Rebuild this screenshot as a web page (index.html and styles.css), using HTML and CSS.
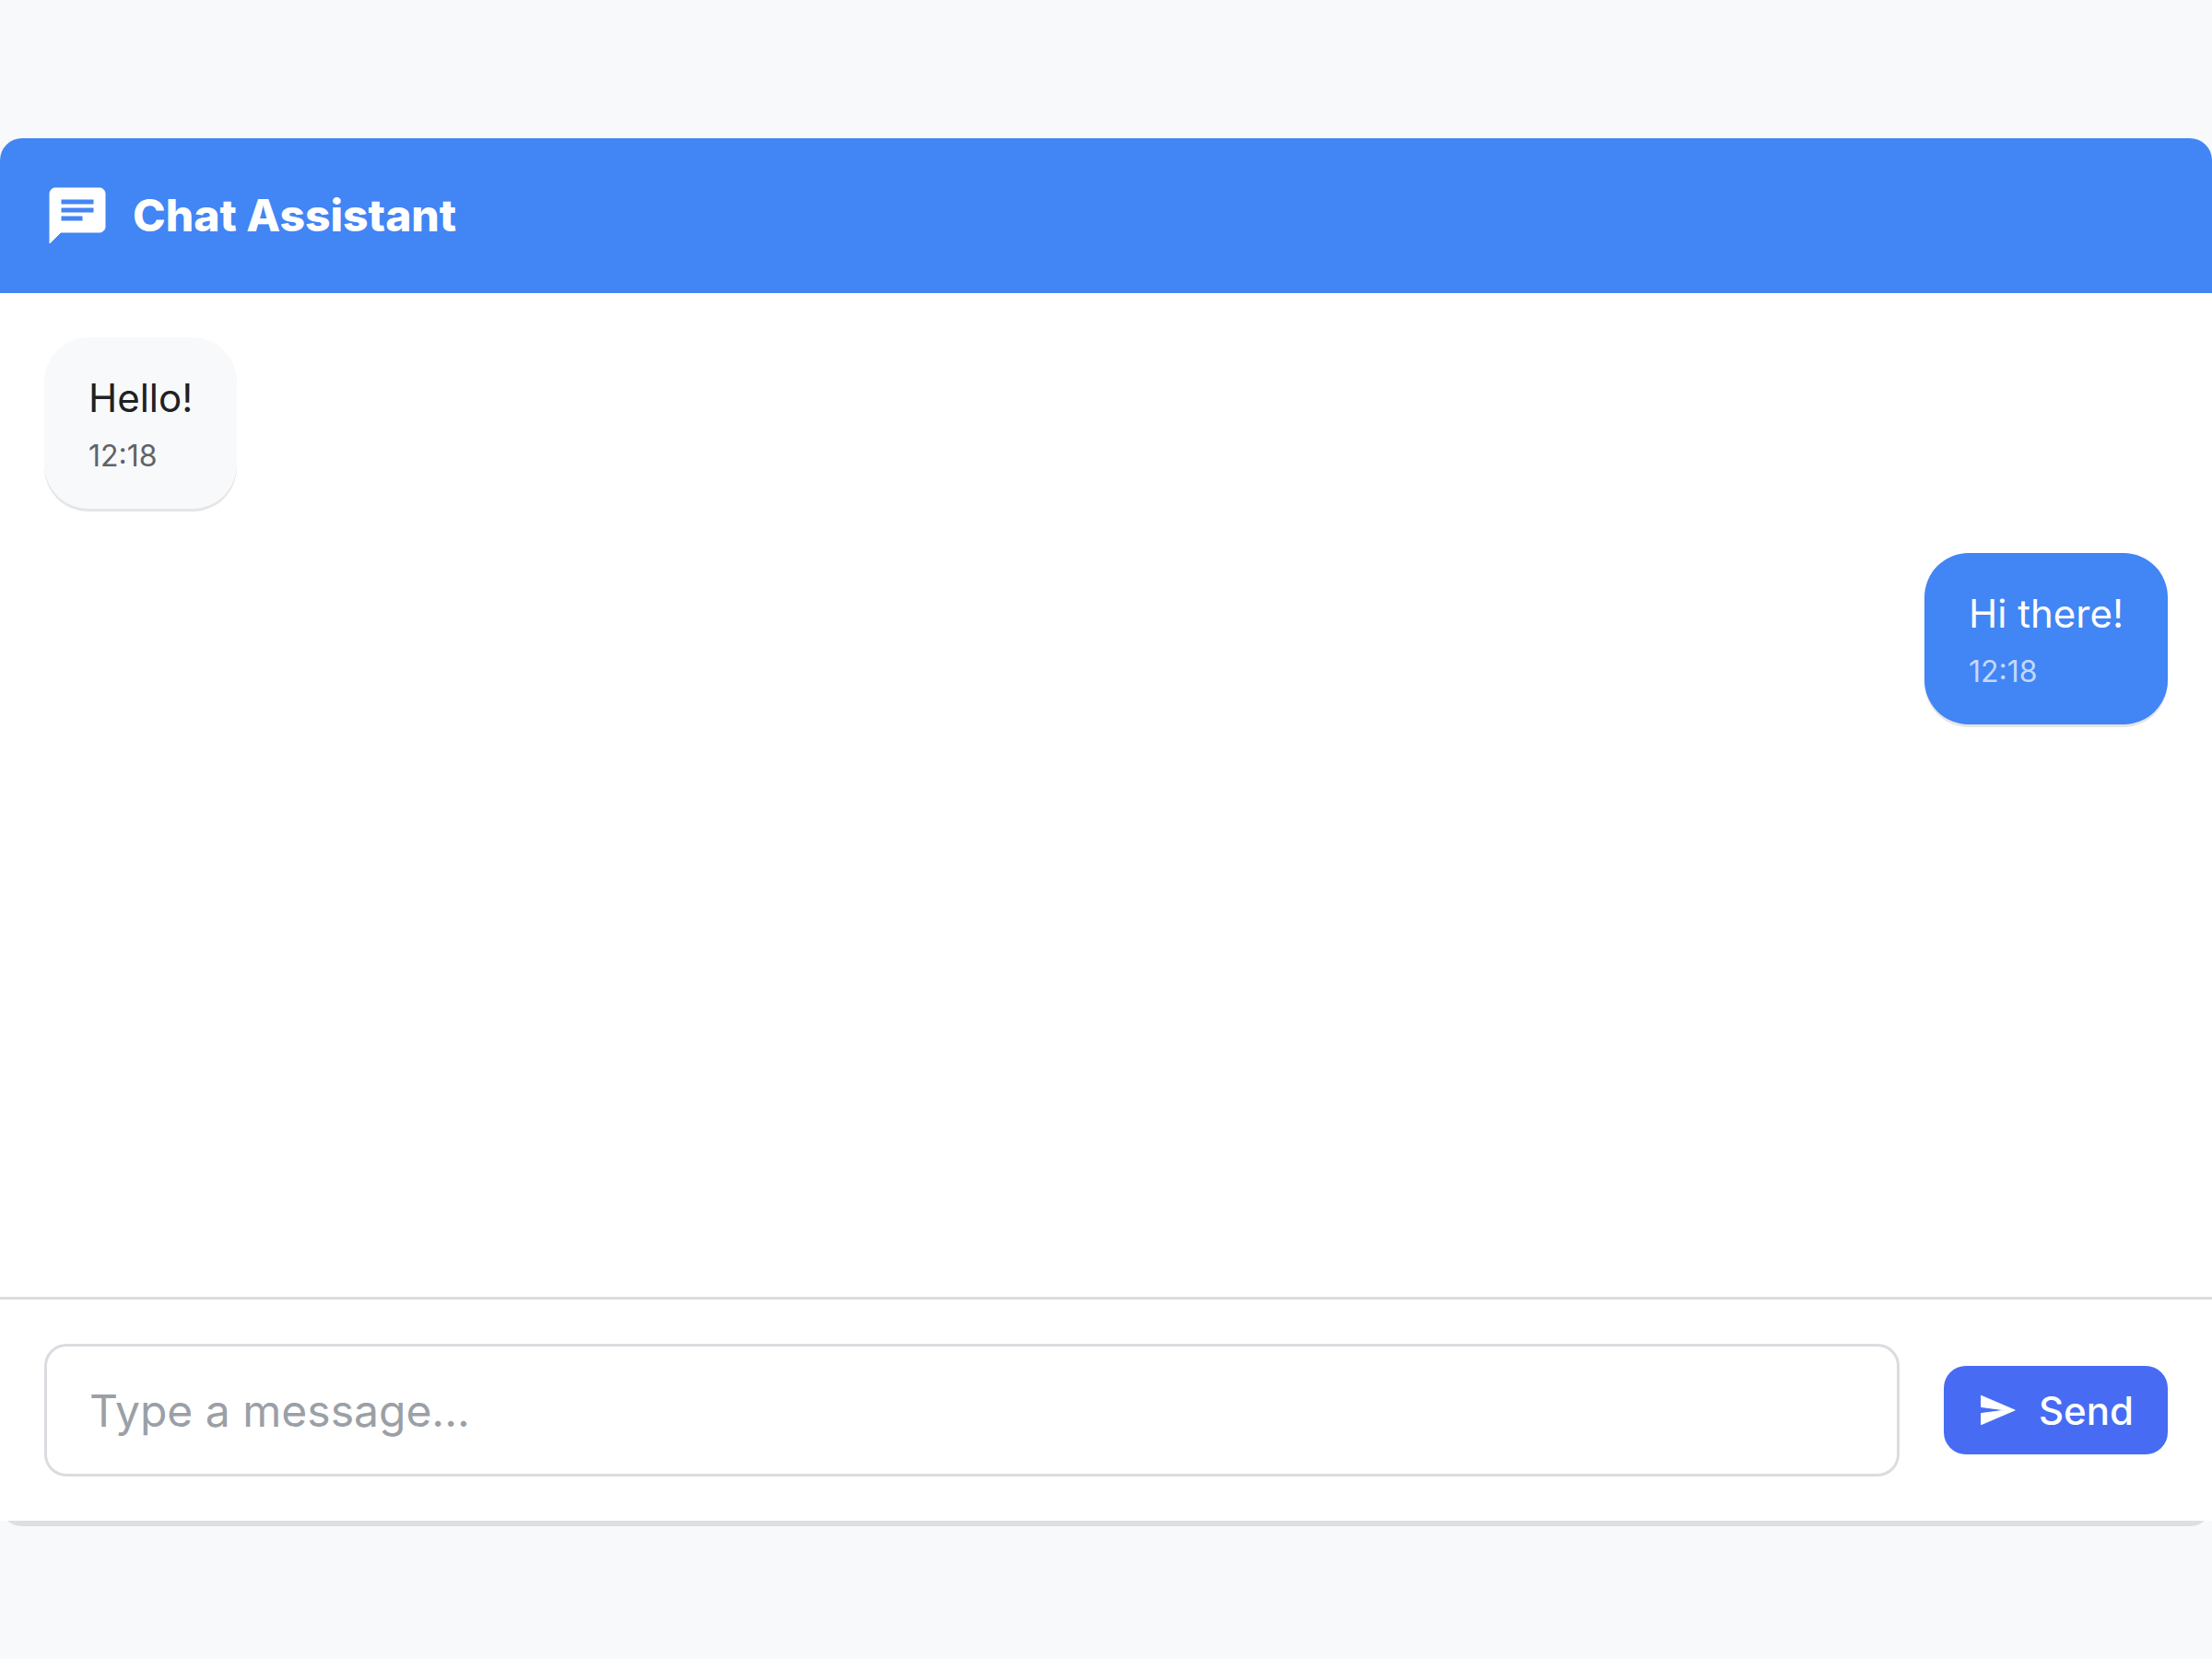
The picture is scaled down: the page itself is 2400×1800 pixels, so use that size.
FILE: index.html
```html
<!DOCTYPE html>
<html lang="en">
<head>
<meta charset="utf-8">
<meta name="viewport" content="width=device-width, initial-scale=1">
<title>Chat Assistant</title>
<link rel="stylesheet" href="styles.css">
</head>
<body>
<main class="chat">
  <header class="chat-header">
    <svg class="chat-icon" viewBox="0 0 24 24" aria-hidden="true"><path d="M20 2H4c-1.100 0-1.990.9-1.990 2L2 22l4-4h14c1.100 0 2-.9 2-2V4c0-1.100-.9-2-2-2zM6 9h12v2H6V9zm8 5H6v-2h8v2zm4-6H6V6h12v2z"/></svg>
    <h1 class="chat-title">Chat Assistant</h1>
  </header>
  <section class="messages" aria-label="Messages">
    <article class="message">
      <p class="message-text">Hello!</p>
      <time class="message-time">12:18</time>
    </article>
    <article class="message message-own">
      <p class="message-text">Hi there!</p>
      <time class="message-time">12:18</time>
    </article>
  </section>
  <form class="composer">
    <input class="composer-input" type="text" placeholder="Type a message..." aria-label="Message">
    <button class="send" type="button">
      <svg class="send-icon" viewBox="0 0 24 24" aria-hidden="true"><path d="M2.010 21L23 12 2.010 3 2 10l15 2-15 2z"/></svg>
      <span>Send</span>
    </button>
  </form>
</main>
</body>
</html>
```
FILE: styles.css
```css
* {
  box-sizing: border-box;
}

body {
  margin: 0;
  min-height: 100vh;
  padding: 150px 0;
  display: flex;
  background: #f8f9fb;
  color: #202124;
  font-family: Inter, "Liberation Sans", sans-serif;
  font-optical-sizing: none;
}

.chat {
  flex: 1;
  display: flex;
  flex-direction: column;
  border-radius: 24px;
  box-shadow: 0 6px 0 rgba(0, 0, 0, 0.1);
}

.chat-header {
  display: flex;
  align-items: center;
  gap: 24px;
  padding: 48px;
  border-radius: 24px 24px 0 0;
  background: #4285f4;
  color: #fff;
}

.chat-icon {
  width: 72px;
  height: 72px;
  fill: currentColor;
  stroke: currentColor;
  stroke-width: 0.33;
}

.chat-title {
  margin: 0;
  font-size: 48px;
  line-height: 72px;
  font-weight: 800;
}

.messages {
  flex: 1;
  display: flex;
  flex-direction: column;
  align-items: flex-start;
  gap: 48px;
  padding: 48px;
  background: #fff;
}

.message {
  padding: 36px 48px;
  border-radius: 48px;
  background: #f8f9fb;
  box-shadow: 0 3px 0 rgba(0, 0, 0, 0.1);
}

.message-own {
  align-self: flex-end;
  background: #4285f4;
  color: #fff;
}

.message-text {
  margin: 0 0 12px;
  font-size: 42px;
  line-height: 60px;
}

.message-time {
  display: block;
  color: #5f6368;
  font-size: 32px;
  line-height: 42px;
}

.message-own .message-time {
  color: rgba(255, 255, 255, 0.7);
}

.composer {
  display: flex;
  align-items: center;
  gap: 48px;
  padding: 48px;
  border-top: 3px solid #dadce0;
  background: #fff;
}

.composer-input {
  flex: 1;
  min-width: 0;
  height: 144px;
  padding: 0 46px;
  border: 3px solid #dadce0;
  border-radius: 24px;
  background: #fff;
  color: inherit;
  font: inherit;
  font-size: 48px;
}

.composer-input::placeholder {
  color: #9aa0a6;
  opacity: 1;
}

.send {
  display: flex;
  align-items: center;
  gap: 24px;
  height: 96px;
  padding: 0 37px;
  border: 0;
  border-radius: 24px;
  background: #476cf3;
  color: #fff;
  font: inherit;
  font-size: 42px;
  font-weight: 500;
}

.send-icon {
  width: 42px;
  height: 42px;
  fill: currentColor;
  stroke: currentColor;
  stroke-width: 0.5;
}
```
